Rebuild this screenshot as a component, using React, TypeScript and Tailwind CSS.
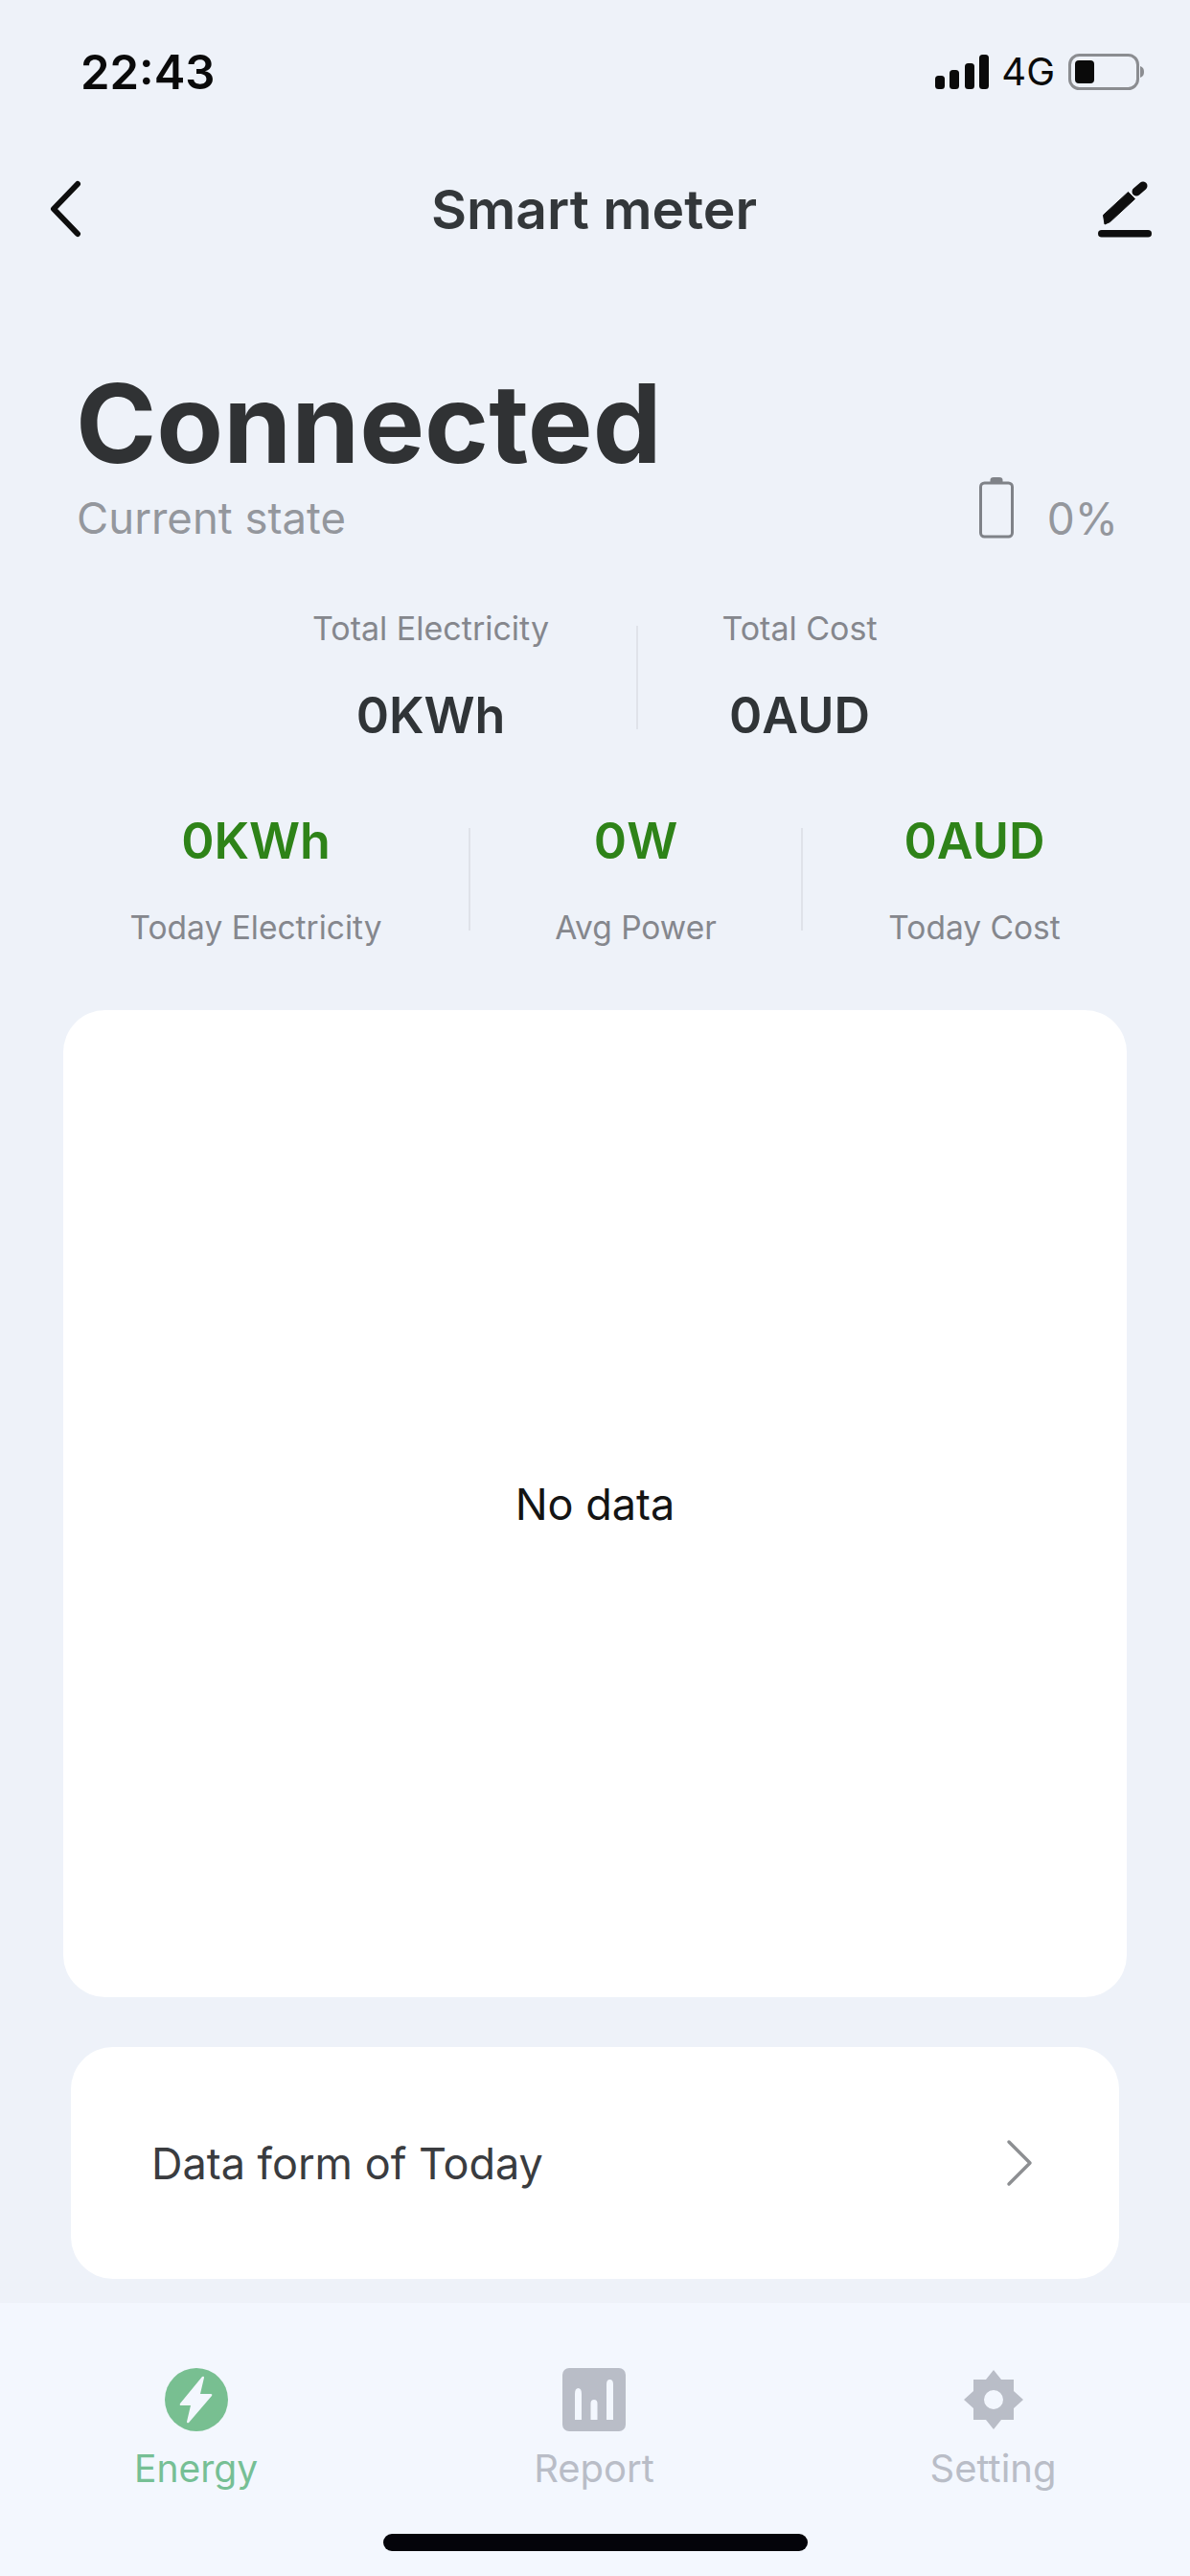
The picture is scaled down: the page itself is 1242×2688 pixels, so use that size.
export default function App() {
  return (
    <div className="flex h-[2688px] w-[1242px] flex-col overflow-hidden bg-[#eef2f9] font-['Inter',sans-serif]">
      {/* Status bar */}
      <div className="flex h-[150px] shrink-0 items-center justify-between pl-[84px] pr-[47px]">
        <span className="text-[49px] font-semibold leading-none text-[#0a0a0a]">22:43</span>
        <div className="flex items-center">
          <svg width="58" height="36" viewBox="0 0 58 36" fill="#0a0a0a">
            <rect x="0" y="22" width="10" height="14" rx="3.5" />
            <rect x="15" y="16" width="10" height="20" rx="3.5" />
            <rect x="31" y="9" width="10" height="27" rx="3.5" />
            <rect x="46" y="0" width="10" height="36" rx="3.5" />
          </svg>
          <span className="ml-[11px] text-[40px] font-normal leading-none text-[#0a0a0a]">4G</span>
          <svg className="ml-[14px]" width="80" height="38" viewBox="0 0 80 38">
            <rect x="1.5" y="1.5" width="71" height="35" rx="10" fill="none" stroke="#8b8d91" strokeWidth="3" />
            <rect x="7" y="7" width="20" height="24" rx="4" fill="#0a0a0a" />
            <path d="M75 13 C78 14 79 16 79 19 C79 22 78 24 75 25 Z" fill="#8b8d91" />
          </svg>
        </div>
      </div>

      {/* Nav bar */}
      <div className="grid h-[136px] shrink-0 grid-cols-[1fr_auto_1fr] items-center pl-[38px] pr-[40px]">
        <svg className="ml-[12px]" width="38" height="60" viewBox="0 0 38 60" fill="none" stroke="#0e0e0e" strokeWidth="6" strokeLinecap="round" strokeLinejoin="round">
          <path d="M31 4 L6 30 L31 56" />
        </svg>
        <span className="text-[57px] font-semibold leading-none text-[#33373a]">Smart meter</span>
        <svg className="justify-self-end" width="58" height="62" viewBox="0 0 58 62" fill="#0e0e0e">
          <path d="M9 47 L7.500 37.400 L33.500 13.400 L40.500 20.600 L14.500 44.600 Z" stroke="#0e0e0e" strokeWidth="1" strokeLinejoin="round" />
          <path d="M42 13 L49 7" fill="none" stroke="#0e0e0e" strokeWidth="9" strokeLinecap="round" />
          <rect x="2" y="53" width="56" height="7.500" rx="3.750" />
        </svg>
      </div>

      {/* Connection state */}
      <div className="mt-[84px] h-[144px] shrink-0 pl-[79px]">
        <span className="text-[114px] font-bold leading-[144px] text-[#303234]">Connected</span>
      </div>
      <div className="flex h-[56px] shrink-0 items-center justify-between pb-[2px] pl-[80px] pr-[75px]">
        <span className="text-[45.5px] leading-none text-[#94979d]">Current state</span>
        <div className="flex items-center">
          <svg className="mb-[22px]" width="36" height="64" viewBox="0 0 36 64" fill="none" stroke="#7f8288" strokeWidth="3">
            <rect x="1.500" y="6" width="33" height="56" rx="4" />
            <path d="M13 5 V3 Q13 1.500 15 1.500 H21 Q23 1.500 23 3 V5" fill="#7f8288" />
          </svg>
          <span className="ml-[35px] text-[46px] leading-none text-[#94979d]">0%</span>
        </div>
      </div>

      {/* Totals */}
      <div className="ml-[235px] mt-[61px] flex shrink-0">
        <Stat width="w-[429px]" label="Total Electricity" value="0KWh" />
        <div className="mt-[22px] h-[108px] w-[2px] bg-[#e0e3ea]" />
        <Stat width="w-[337px]" label="Total Cost" value="0AUD" />
      </div>

      {/* Today */}
      <div className="ml-[45px] mt-[81px] flex shrink-0">
        <TodayStat width="w-[444px]" value="0KWh" label="Today Electricity" />
        <div className="mt-[11px] h-[107px] w-[2px] bg-[#dfe2e9]" />
        <TodayStat width="w-[345px]" value="0W" label="Avg Power" />
        <div className="mt-[11px] h-[107px] w-[2px] bg-[#dfe2e9]" />
        <TodayStat width="w-[358px]" value="0AUD" label="Today Cost" />
      </div>

      {/* Chart card */}
      <div className="mx-[66px] mt-[61px] flex h-[1030px] shrink-0 items-center justify-center rounded-[44px] bg-white">
        <span className="text-[45px] leading-none text-[#141414]">No data</span>
      </div>

      {/* Data form */}
      <div className="mx-[74px] mt-[52px] flex h-[242px] shrink-0 items-center justify-between rounded-[44px] bg-white pl-[84px] pr-[89px]">
        <span className="text-[45px] leading-none text-[#3a3c3f]">Data form of Today</span>
        <svg width="30" height="50" viewBox="0 0 30 50" fill="none" stroke="#8d8f92" strokeWidth="3.5" strokeLinecap="round" strokeLinejoin="round">
          <path d="M4 3 L26 25 L4 47" />
        </svg>
      </div>

      {/* Tab bar */}
      <div className="mt-[25px] flex flex-1 flex-col items-center bg-[#f3f7fe] pt-[68px]">
        <div className="grid w-full grid-cols-[409px_422px_411px]">
          <Tab label="Energy" color="text-[39px] text-[#76bf95]">
            <svg width="66" height="66" viewBox="0 0 66 66">
              <circle cx="33" cy="33" r="33" fill="#78bf91" />
              <path d="M39 9 L16 37 Q15 39 17 39 L27 39 L23 56 Q23 58 25 57 L49 29 Q50 27 48 27 L37 27 L41 10 Q41 8 39 9 Z" fill="#f3f7fe" />
            </svg>
          </Tab>
          <Tab label="Report" color="text-[40px] text-[#b9bdc7]">
            <svg width="66" height="66" viewBox="0 0 66 66">
              <rect width="66" height="66" rx="7" fill="#b9bdc7" />
              <path d="M13 54 V27 Q13 21 16.500 21 Q20 21 20 27 V54 Z M29.500 54 V37 Q29.500 33 33 33 Q36.500 33 36.500 37 V54 Z M46 54 V17 Q46 12 49.500 12 Q53 12 53 17 V54 Z" fill="#f3f7fe" />
            </svg>
          </Tab>
          <Tab label="Setting" color="text-[40px] text-[#b9bdc7]">
            <svg width="66" height="66" viewBox="0 0 66 66">
              <path fillRule="evenodd" fill="#b9bdc7" d="M33 2 L41 12 L54 12 L54 24 L64 33 L54 42 L54 54 L41 54 L33 64 L25 54 L12 54 L12 42 L2 33 L12 24 L12 12 L25 12 Z M33 23 A10 10 0 1 0 33 43 A10 10 0 1 0 33 23 Z" />
            </svg>
          </Tab>
        </div>
        <div className="mt-[43px] h-[18px] w-[443px] rounded-[9px] bg-[#04040a]" />
      </div>
    </div>
  );
}

function Stat({ width, label, value }: { width: string; label: string; value: string }) {
  return (
    <div className={`flex flex-col items-center ${width}`}>
      <span className="h-[50px] text-[34px] leading-[50px] text-[#85878d]">{label}</span>
      <span className="mt-[41px] h-[50px] text-[52px] font-semibold leading-[50px] text-[#303437]">{value}</span>
    </div>
  );
}

function TodayStat({ width, value, label }: { width: string; value: string; label: string }) {
  return (
    <div className={`flex flex-col items-center ${width}`}>
      <span className="h-[50px] text-[52px] font-semibold leading-[50px] text-[#2e8318]">{value}</span>
      <span className="mt-[40px] h-[50px] text-[33.5px] leading-[50px] text-[#85878d]">{label}</span>
    </div>
  );
}

function Tab({ label, color, children }: { label: string; color: string; children: React.ReactNode }) {
  return (
    <div className="flex flex-col items-center">
      {children}
      <span className={`mt-[14px] h-[50px] leading-[50px] ${color}`}>{label}</span>
    </div>
  );
}
